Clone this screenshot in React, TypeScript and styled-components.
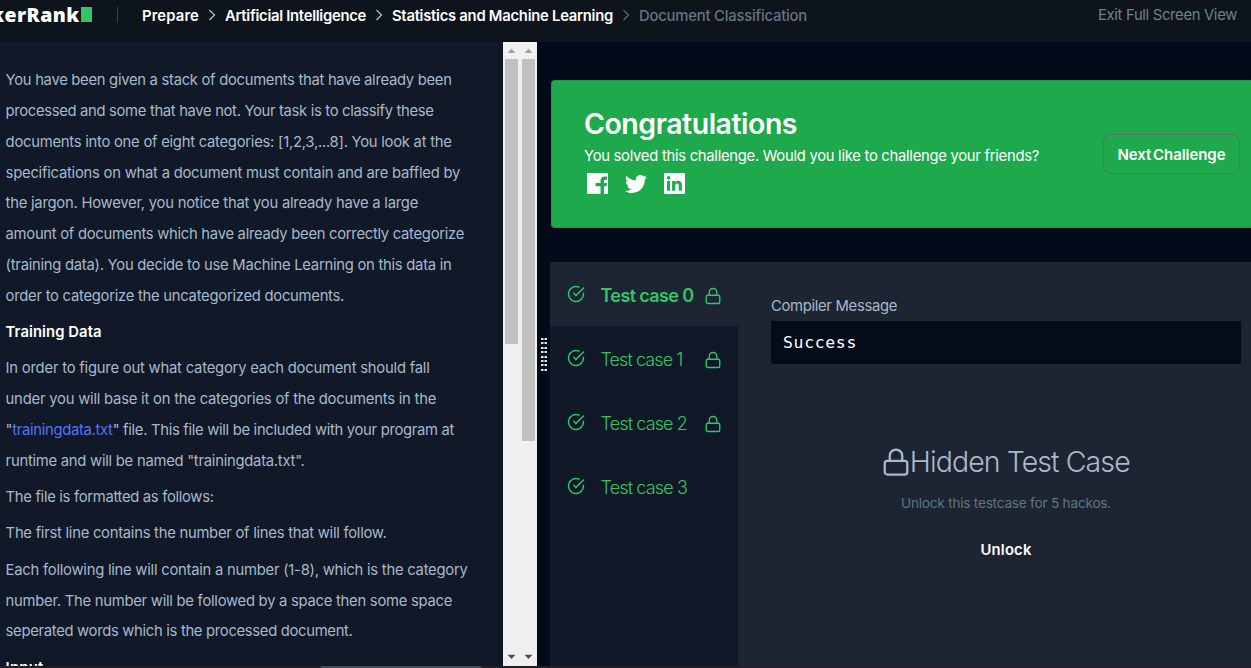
import React, { useLayoutEffect, useRef, useState } from "react";
import styled, { createGlobalStyle, css } from "styled-components";
import { FiLock } from "react-icons/fi";
import { IoLogoTwitter } from "react-icons/io";

const GlobalStyle = createGlobalStyle`
  *, *::before, *::after { box-sizing: border-box; }
  html, body { margin: 0; padding: 0; background: #030a19; overflow: hidden; }
  body { font-family: Inter, "Liberation Sans", sans-serif; font-size: 14.8px; color: #a6b8cc; }
  p, h1, h2, h3 { margin: 0; font: inherit; }
`;

const FitBox = styled.span`
  display: inline-block;
  white-space: pre;
`;

/* Tracks a single line of text so that it spans the given measure. */
function Fit({ w, children }: { w: number; children: React.ReactNode }) {
  const ref = useRef<HTMLSpanElement>(null);
  const [spacing, setSpacing] = useState(0);
  useLayoutEffect(() => {
    const el = ref.current;
    if (!el) return;
    el.style.letterSpacing = "0px";
    const count = (el.textContent || "").length;
    setSpacing((w - el.getBoundingClientRect().width) / count);
  }, [w]);
  return (
    <FitBox ref={ref} style={{ letterSpacing: `${spacing}px` }}>
      {children}
    </FitBox>
  );
}

const Page = styled.div`
  width: 1251px;
  height: 668px;
  display: flex;
  flex-direction: column;
  overflow: hidden;
`;

const Header = styled.header`
  flex: 0 0 42px;
  height: 42px;
  background: #0d141c;
  display: flex;
  align-items: flex-start;
  overflow: hidden;
`;

const Logo = styled.div`
  width: 92px;
  height: 29px;
  flex: none;
  display: flex;
  justify-content: flex-end;
  align-items: center;
  overflow: hidden;
  color: #fff;
  font: 800 19.5px/29px "Open Sans", sans-serif;
`;

const LogoBlock = styled.i`
  flex: none;
  width: 11px;
  height: 15px;
  margin-left: 1.5px;
  background: #32c766;
`;

const Divider = styled.i`
  flex: none;
  width: 1px;
  height: 16px;
  margin: 7px 24px 0 25px;
  background: #39424e;
`;

const Crumbs = styled.nav`
  flex: 1;
  display: flex;
  align-items: center;
  height: 32px;
  font-weight: 600;
  color: #fff;
`;

const Crumb = styled.span<{ $muted?: boolean }>`
  line-height: 32px;
  ${(p) => p.$muted && css`color: #677381; font-weight: 500;`}
`;

const Chevron = styled.svg<{ $muted?: boolean }>`
  flex: none;
  width: 8px;
  height: 12px;
  margin: 0 9px 2px 9px;
  fill: none;
  stroke: ${(p) => (p.$muted ? "#5c6773" : "#b6bec8")};
  stroke-width: 1.3;
`;

const ExitLink = styled.a`
  line-height: 30px;
  margin-right: 14px;
  color: #70818b;
`;

const Body = styled.main`
  flex: none;
  height: 624px;
  display: flex;
  overflow: hidden;
`;

const Statement = styled.section`
  flex: 0 0 503px;
  padding: 23px 0 0 5.6px;
  background: #111827;
  overflow: hidden;
`;

const Paragraph = styled.p`
  margin-bottom: 5.37px;
`;

const Line = styled.span`
  display: block;
  height: 30.86px;
  line-height: 30.86px;
`;

const Heading = styled.h3`
  height: 30.86px;
  line-height: 30.86px;
  margin-bottom: 5.37px;
  font-weight: 600;
  color: #fff;
`;

const FileLink = styled.a`
  color: #5274f6;
`;

const ScrollTrack = styled.div`
  flex: 0 0 17px;
  display: flex;
  flex-direction: column;
  align-items: center;
  background: #f0f0f0;
`;

const ScrollThumb = styled.div<{ $h: number }>`
  width: 13px;
  height: ${(p) => p.$h}px;
  background: #c1c1c1;
`;

const ArrowButton = styled.svg<{ $end?: boolean }>`
  width: 17px;
  height: 17px;
  flex: none;
  margin-top: ${(p) => (p.$end ? "auto" : "0")};
  fill: ${(p) => (p.$end ? "#505050" : "#a3a3a3")};
`;

const Grip = styled.div`
  flex: 0 0 13px;
  display: flex;
  flex-direction: column;
  align-items: center;
  gap: 2.4px;
  padding: 296px 0 0 1px;
`;

const GripRow = styled.i`
  width: 6px;
  height: 2px;
  background: linear-gradient(90deg, #e4e7ec 2px, #7d838c 2px 4px, #e4e7ec 4px);
`;

const Results = styled.section`
  flex: 1;
  min-width: 0;
  display: flex;
  flex-direction: column;
`;

const Banner = styled.div`
  flex: none;
  height: 148px;
  margin: 38px 0 34px 1px;
  padding: 0 11px 0 32px;
  display: flex;
  justify-content: space-between;
  background: #1ea94c;
  border: 1px solid #23964b;
  border-right: 0;
  border-radius: 4px 0 0 4px;
  color: #fff;
`;

const BannerText = styled.div`
  display: flex;
  flex-direction: column;
  padding-top: 23px;
`;

const BannerTitle = styled.h1`
  font-size: 28.5px;
  font-weight: 600;
  line-height: 40px;
`;

const BannerNote = styled.p`
  line-height: 24px;
`;

const Socials = styled.div`
  display: flex;
  align-items: center;
  gap: 17px;
  padding: 5px 0 0 3px;
  fill: #fff;
`;

const SquareIcon = styled.svg`
  width: 21px;
  height: 21px;
`;

const TwitterIcon = styled(IoLogoTwitter)`
  width: 24px;
  height: 24px;
  margin: -1.5px -1px;
`;

const NextButton = styled.button`
  align-self: center;
  width: 137px;
  height: 40px;
  padding: 0;
  border: 1px solid #557468;
  border-radius: 8px;
  background: transparent;
  color: #fff;
  font: 600 15px/39px Inter, sans-serif;
  word-spacing: -2px;
`;

const TestArea = styled.div`
  flex: 1;
  display: flex;
  background: #1e2532;
`;

const TestList = styled.div`
  flex: 0 0 188px;
  background: #111827;
`;

const TestTab = styled.div<{ $active?: boolean }>`
  height: 64px;
  display: grid;
  grid-template-columns: 33.5px 103.5px 18px;
  grid-template-rows: 64px;
  align-items: center;
  padding: 0 0 0 17px;
  font-size: 18px;
  color: #32c766;
  font-weight: ${(p) => (p.$active ? 600 : 300)};
  background: ${(p) => (p.$active ? "#1e2532" : "transparent")};
`;

const TestName = styled.span`
  line-height: 62px;
  padding-top: 3px;
`;

const CheckIcon = styled.svg`
  width: 18px;
  height: 18px;
  fill: none;
  stroke: currentColor;
  stroke-width: 1.9;
  stroke-linecap: round;
  stroke-linejoin: round;
`;

const LockIcon = styled(FiLock)`
  width: 18px;
  height: 18px;
  margin-top: 4px;
  stroke-width: 1.8;
`;

const Detail = styled.div`
  flex: 1;
  padding: 32px 10px 0 33px;
`;

const Label = styled.div`
  height: 27px;
  line-height: 24px;
`;

const Output = styled.pre`
  margin: 0;
  height: 43px;
  padding-left: 12px;
  background: #040b19;
  color: #fff;
  font: 16.5px/43px "DejaVu Sans Mono", monospace;
`;

const Locked = styled.div`
  display: flex;
  flex-direction: column;
  align-items: center;
  padding-top: 78px;
`;

const LockedTitle = styled.h2`
  display: flex;
  align-items: center;
  height: 40px;
  margin-right: 1px;
  font-size: 28.5px;
  font-weight: 300;
  color: #a9b9cf;
  line-height: 38px;
  svg { width: 30px; height: 30px; stroke-width: 1.8; margin-right: -1.5px; }
`;

const LockedNote = styled.p`
  height: 40px;
  line-height: 42px;
  font-size: 13.7px;
  color: #5d7580;
`;

const UnlockButton = styled.a`
  line-height: 56px;
  font-weight: 600;
  color: #fff;
`;

const BottomBar = styled.footer`
  flex: none;
  height: 2px;
  display: flex;
  background: #211f24;
  padding-left: 321px;
`;

const BottomThumb = styled.div`
  width: 160px;
  background: #484952;
`;

type Row = [React.ReactNode, number];

const paragraphs: { heading?: boolean; rows: Row[] }[] = [
  {
    rows: [
      ["You have been given a stack of documents that have already been", 446],
      ["processed and some that have not. Your task is to classify these", 428],
      ["documents into one of eight categories: [1,2,3,...8]. You look at the", 446],
      ["specifications on what a document must contain and are baffled by", 454.5],
      ["the jargon. However, you notice that you already have a large", 412.5],
      ["amount of documents which have already been correctly categorize", 458.5],
      ["(training data). You decide to use Machine Learning on this data in", 446],
      ["order to categorize the uncategorized documents.", 338.5],
    ],
  },
  { heading: true, rows: [["Training Data", 96]] },
  {
    rows: [
      ["In order to figure out what category each document should fall", 424],
      ["under you will base it on the categories of the documents in the", 430.5],
      [<>"<FileLink>trainingdata.txt</FileLink>" file. This file will be included with your program at</>, 448.5],
      ['runtime and will be named "trainingdata.txt".', 299],
    ],
  },
  { rows: [["The file is formatted as follows:", 208]] },
  { rows: [["The first line contains the number of lines that will follow.", 381]] },
  {
    rows: [
      ["Each following line will contain a number (1-8), which is the category", 462],
      ["number. The number will be followed by a space then some space", 446.5],
      ["seperated words which is the processed document.", 347],
    ],
  },
  { heading: true, rows: [["Input", 38]] },
];

const tests = [
  { name: "Test case 0", w: 93, active: true, locked: true },
  { name: "Test case 1", w: 82, locked: true },
  { name: "Test case 2", w: 86.5, locked: true },
  { name: "Test case 3", w: 86.5 },
];

function Separator({ muted }: { muted?: boolean }) {
  return (
    <Chevron $muted={muted} viewBox="0 0 8 12">
      <path d="M1.5 1 6.5 6l-5 5" />
    </Chevron>
  );
}

function FacebookIcon() {
  return (
    <SquareIcon viewBox="0 0 21 21">
      <path d="M0 0H21V21H17.1V13.2H19.6L20 10H17.1V8.2C17.1 7.3 17.5 6.8 18.5 6.8H20V3.8C19.5 3.7 18.7 3.6 17.8 3.6C15.3 3.6 13.5 5.1 13.5 7.8V10H8.6V13.2H13.5V21H0Z" />
    </SquareIcon>
  );
}

function LinkedinIcon() {
  return (
    <SquareIcon viewBox="0 0 21 21">
      <path
        fillRule="evenodd"
        d="M1.3 0H19.7Q21 0 21 1.3V19.7Q21 21 19.7 21H1.3Q0 21 0 19.7V1.3Q0 0 1.3 0ZM3 8V17.8H6.1V8ZM4.6 3.1a1.8 1.8 0 1 0 0 3.6a1.8 1.8 0 1 0 0-3.6ZM8.1 8V17.8H11.2V13C11.2 11.5 11.8 10.5 13.1 10.5S14.8 11.6 14.8 13V17.8H17.9V12.2C17.9 9.4 16.6 7.8 14.2 7.8C12.7 7.8 11.6 8.5 11.1 9.4V8Z"
      />
    </SquareIcon>
  );
}

function Check() {
  return (
    <CheckIcon viewBox="0 0 24 24">
      <path d="M22 11.08V12a10 10 0 1 1-5.93-9.14" />
      <path d="M22 4 12 14.01l-3-3" />
    </CheckIcon>
  );
}

function Scrollbar({ thumb }: { thumb: number }) {
  return (
    <ScrollTrack>
      <ArrowButton viewBox="0 0 17 17"><path d="M8.5 6.5 12.5 11h-8z" /></ArrowButton>
      <ScrollThumb $h={thumb} />
      <ArrowButton $end viewBox="0 0 17 17"><path d="M8.5 10 12.5 5.8h-8z" /></ArrowButton>
    </ScrollTrack>
  );
}

export default function App() {
  return (
    <Page>
      <GlobalStyle />
      <Header>
        <Logo><Fit w={127}>HackerRank</Fit><LogoBlock /></Logo>
        <Divider />
        <Crumbs>
          <Crumb><Fit w={57}>Prepare</Fit></Crumb>
          <Separator />
          <Crumb><Fit w={141}>Artificial Intelligence</Fit></Crumb>
          <Separator />
          <Crumb><Fit w={221}>Statistics and Machine Learning</Fit></Crumb>
          <Separator muted />
          <Crumb $muted><Fit w={168}>Document Classification</Fit></Crumb>
        </Crumbs>
        <ExitLink><Fit w={139}>Exit Full Screen View</Fit></ExitLink>
      </Header>
      <Body>
        <Statement>
          {paragraphs.map((p, i) =>
            p.heading ? (
              <Heading key={i}><Fit w={p.rows[0][1]}>{p.rows[0][0]}</Fit></Heading>
            ) : (
              <Paragraph key={i}>
                {p.rows.map(([text, w], j) => (
                  <Line key={j}><Fit w={w}>{text}</Fit></Line>
                ))}
              </Paragraph>
            )
          )}
        </Statement>
        <Scrollbar thumb={285} />
        <Scrollbar thumb={382} />
        <Grip>
          {Array.from({ length: 8 }, (_, i) => <GripRow key={i} />)}
        </Grip>
        <Results>
          <Banner>
            <BannerText>
              <BannerTitle><Fit w={213}>Congratulations</Fit></BannerTitle>
              <BannerNote>
                <Fit w={455}>You solved this challenge. Would you like to challenge your friends?</Fit>
              </BannerNote>
              <Socials><FacebookIcon /><TwitterIcon /><LinkedinIcon /></Socials>
            </BannerText>
            <NextButton><Fit w={108}>Next Challenge</Fit></NextButton>
          </Banner>
          <TestArea>
            <TestList>
              {tests.map((t) => (
                <TestTab key={t.name} $active={t.active}>
                  <Check />
                  <TestName><Fit w={t.w}>{t.name}</Fit></TestName>
                  {t.locked && <LockIcon />}
                </TestTab>
              ))}
            </TestList>
            <Detail>
              <Label><Fit w={126}>Compiler Message</Fit></Label>
              <Output><Fit w={74}>Success</Fit></Output>
              <Locked>
                <LockedTitle><FiLock /><Fit w={220}>Hidden Test Case</Fit></LockedTitle>
                <LockedNote><Fit w={210}>Unlock this testcase for 5 hackos.</Fit></LockedNote>
                <UnlockButton><Fit w={51}>Unlock</Fit></UnlockButton>
              </Locked>
            </Detail>
          </TestArea>
        </Results>
      </Body>
      <BottomBar><BottomThumb /></BottomBar>
    </Page>
  );
}
